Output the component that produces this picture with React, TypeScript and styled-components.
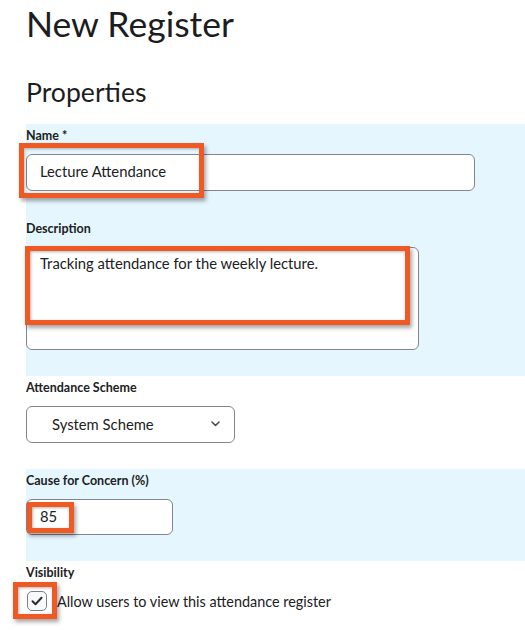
import * as React from 'react';
import styled, { createGlobalStyle } from 'styled-components';

const GlobalStyle = createGlobalStyle`
  html, body {
    margin: 0;
    padding: 0;
    background: #ffffff;
  }
  body {
    font-family: Lato, 'Open Sans', sans-serif;
    color: #202122;
  }
`;

const Page = styled.div`
  width: 525px;
  height: 630px;
  overflow: hidden;
  padding-left: 26px;
  box-sizing: border-box;
`;

const PageTitle = styled.h1`
  margin: 2px 0 0 0;
  font-size: 35.5px;
  line-height: 44px;
  font-weight: 400;
  color: #1c1d1e;
`;

const SectionTitle = styled.h2`
  margin: 31px 0 16px 0;
  font-size: 26.6px;
  line-height: 31px;
  font-weight: 400;
  color: #1c1d1e;
`;

const Band = styled.div<{ $tint?: boolean }>`
  background: ${(p) => (p.$tint ? '#e5f6fe' : 'transparent')};
`;

const Field = styled.div`
  display: flex;
  flex-direction: column;
  align-items: flex-start;
  padding: 4px 0 26px 0;
`;

const Label = styled.label`
  font-size: 12.5px;
  line-height: 16px;
  font-weight: 700;
  color: #202122;
  margin-bottom: 10px;
`;

const Anchor = styled.div`
  position: relative;
`;

const TextInput = styled.div<{ $width: number; $height: number }>`
  width: ${(p) => p.$width}px;
  height: ${(p) => p.$height}px;
  box-sizing: border-box;
  border: 1px solid #80868b;
  border-radius: 6px;
  background: #ffffff;
  padding: 0 13px 3px 13px;
  display: flex;
  align-items: center;
  font-size: 14.8px;
  color: #202122;
`;

const TextArea = styled.div`
  width: 393px;
  height: 103px;
  box-sizing: border-box;
  border: 1px solid #80868b;
  border-radius: 6px;
  background: #ffffff;
  padding: 5px 13px;
  font-size: 14.8px;
  line-height: 20px;
  color: #202122;
`;

const Select = styled.div`
  width: 209px;
  height: 37px;
  box-sizing: border-box;
  border: 1px solid #80868b;
  border-radius: 6px;
  background: #ffffff;
  padding: 0 14px 2px 25px;
  display: flex;
  align-items: center;
  justify-content: space-between;
  font-size: 14.8px;
  color: #202122;
`;

const CheckRow = styled.div`
  display: flex;
  align-items: center;
  gap: 10px;
  padding-left: 1px;
  font-size: 14.4px;
  color: #202122;
`;

const CheckBox = styled.div`
  width: 20px;
  height: 20px;
  box-sizing: border-box;
  border: 1.5px solid #7c8186;
  border-radius: 5px;
  background: #f9fafb;
  display: flex;
  align-items: center;
  justify-content: center;
`;

// orange annotation frame laid over a control
const Callout = styled.div<{ $x: number; $y: number; $w: number; $h: number }>`
  position: absolute;
  left: ${(p) => p.$x}px;
  top: ${(p) => p.$y}px;
  width: ${(p) => p.$w}px;
  height: ${(p) => p.$h}px;
  box-sizing: border-box;
  border: 5px solid #ef5a24;
  box-shadow: 2px 3px 4px rgba(0, 0, 0, 0.35),
    inset 1px 1px 3px rgba(0, 0, 0, 0.3);
  pointer-events: none;
`;

const Chevron = () => (
  <svg width="9" height="6" viewBox="0 0 9 6" fill="none">
    <path
      d="M1 1l3.5 3.5L8 1"
      stroke="#494c4e"
      strokeWidth="1.6"
      strokeLinecap="round"
      strokeLinejoin="round"
    />
  </svg>
);

const Tick = () => (
  <svg width="12" height="10" viewBox="0 0 12 10" fill="none">
    <path
      d="M1.5 5.2l3 3 6-6.5"
      stroke="#2b2d2f"
      strokeWidth="2"
      strokeLinecap="round"
      strokeLinejoin="round"
    />
  </svg>
);

export default function App() {
  return (
    <Page>
      <GlobalStyle />
      <PageTitle>New Register</PageTitle>
      <SectionTitle>Properties</SectionTitle>

      <Band $tint>
        <Field>
          <Label>Name *</Label>
          <Anchor>
            <TextInput $width={449} $height={37}>
              Lecture Attendance
            </TextInput>
            <Callout $x={-7} $y={-11} $w={185} $h={55} />
          </Anchor>
        </Field>
        <Field>
          <Label>Description</Label>
          <Anchor>
            <TextArea>Tracking attendance for the weekly lecture.</TextArea>
            <Callout $x={-1} $y={-1} $w={385} $h={79} />
          </Anchor>
        </Field>
      </Band>

      <Band>
        <Field>
          <Label>Attendance Scheme</Label>
          <Select>
            <span>System Scheme</span>
            <Chevron />
          </Select>
        </Field>
      </Band>

      <Band $tint>
        <Field>
          <Label>Cause for Concern (%)</Label>
          <Anchor>
            <TextInput $width={147} $height={36}>
              85
            </TextInput>
            <Callout $x={1} $y={3} $w={47} $h={31} />
          </Anchor>
        </Field>
      </Band>

      <Band>
        <Field>
          <Label>Visibility</Label>
          <CheckRow>
            <Anchor>
              <CheckBox>
                <Tick />
              </CheckBox>
              <Callout $x={-14} $y={-9} $w={44} $h={37} />
            </Anchor>
            <span>Allow users to view this attendance register</span>
          </CheckRow>
        </Field>
      </Band>
    </Page>
  );
}
